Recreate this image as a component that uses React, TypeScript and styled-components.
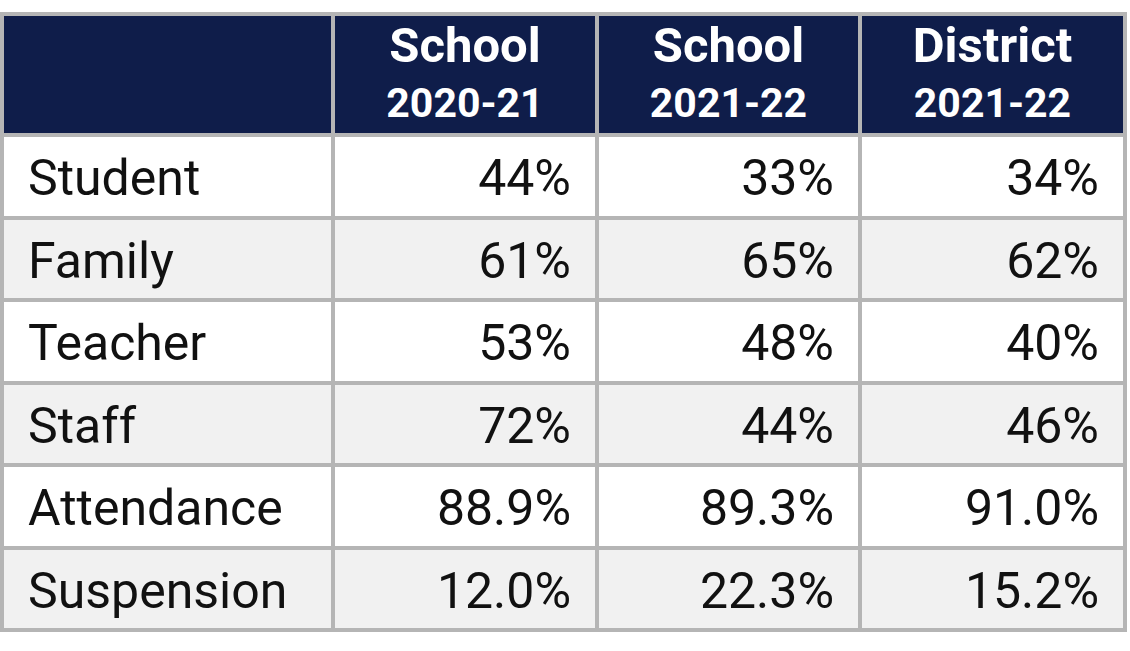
import React from 'react';
import styled, { createGlobalStyle } from 'styled-components';

const GlobalStyle = createGlobalStyle`
  body {
    margin: 0;
    background: #ffffff;
    font-family: Roboto, "Liberation Sans", Arial, sans-serif;
  }
`;

const Page = styled.div`
  padding-top: 12px;
`;

const Grid = styled.div`
  display: grid;
  grid-template-columns: 327px 260px 259px 261px;
  grid-template-rows: 117px repeat(6, 78.5px);
  gap: 4px;
  padding: 4px;
  width: 1127px;
  box-sizing: border-box;
  background: #b5b5b5;
`;

const HeadCell = styled.div`
  background: #0f1d4a;
  color: #ffffff;
  text-align: center;
  padding-top: 3px;
  font-weight: 700;
`;

const HeadTitle = styled.div`
  font-size: 49px;
  line-height: 54px;
`;

const HeadYear = styled.div`
  font-size: 41px;
  line-height: 60px;
`;

const Cell = styled.div<{ $shaded: boolean; $numeric?: boolean }>`
  display: flex;
  align-items: center;
  justify-content: ${(p) => (p.$numeric ? 'flex-end' : 'flex-start')};
  padding: 4px ${(p) => (p.$numeric ? '24px' : '0')} 0 ${(p) => (p.$numeric ? '0' : '24px')};
  background: ${(p) => (p.$shaded ? '#f1f1f1' : '#ffffff')};
  color: #111111;
  font-size: 50px;
  line-height: 1;
`;

const columns = [
  { title: 'School', year: '2020-21' },
  { title: 'School', year: '2021-22' },
  { title: 'District', year: '2021-22' },
];

const rows: [string, string, string, string][] = [
  ['Student', '44%', '33%', '34%'],
  ['Family', '61%', '65%', '62%'],
  ['Teacher', '53%', '48%', '40%'],
  ['Staff', '72%', '44%', '46%'],
  ['Attendance', '88.9%', '89.3%', '91.0%'],
  ['Suspension', '12.0%', '22.3%', '15.2%'],
];

export default function App() {
  return (
    <Page>
      <GlobalStyle />
      <Grid>
        <HeadCell />
        {columns.map((c, i) => (
          <HeadCell key={i}>
            <HeadTitle>{c.title}</HeadTitle>
            <HeadYear>{c.year}</HeadYear>
          </HeadCell>
        ))}
        {rows.map((r, ri) =>
          r.map((v, ci) => (
            <Cell key={`${ri}-${ci}`} $shaded={ri % 2 === 1} $numeric={ci > 0}>
              {v}
            </Cell>
          ))
        )}
      </Grid>
    </Page>
  );
}
